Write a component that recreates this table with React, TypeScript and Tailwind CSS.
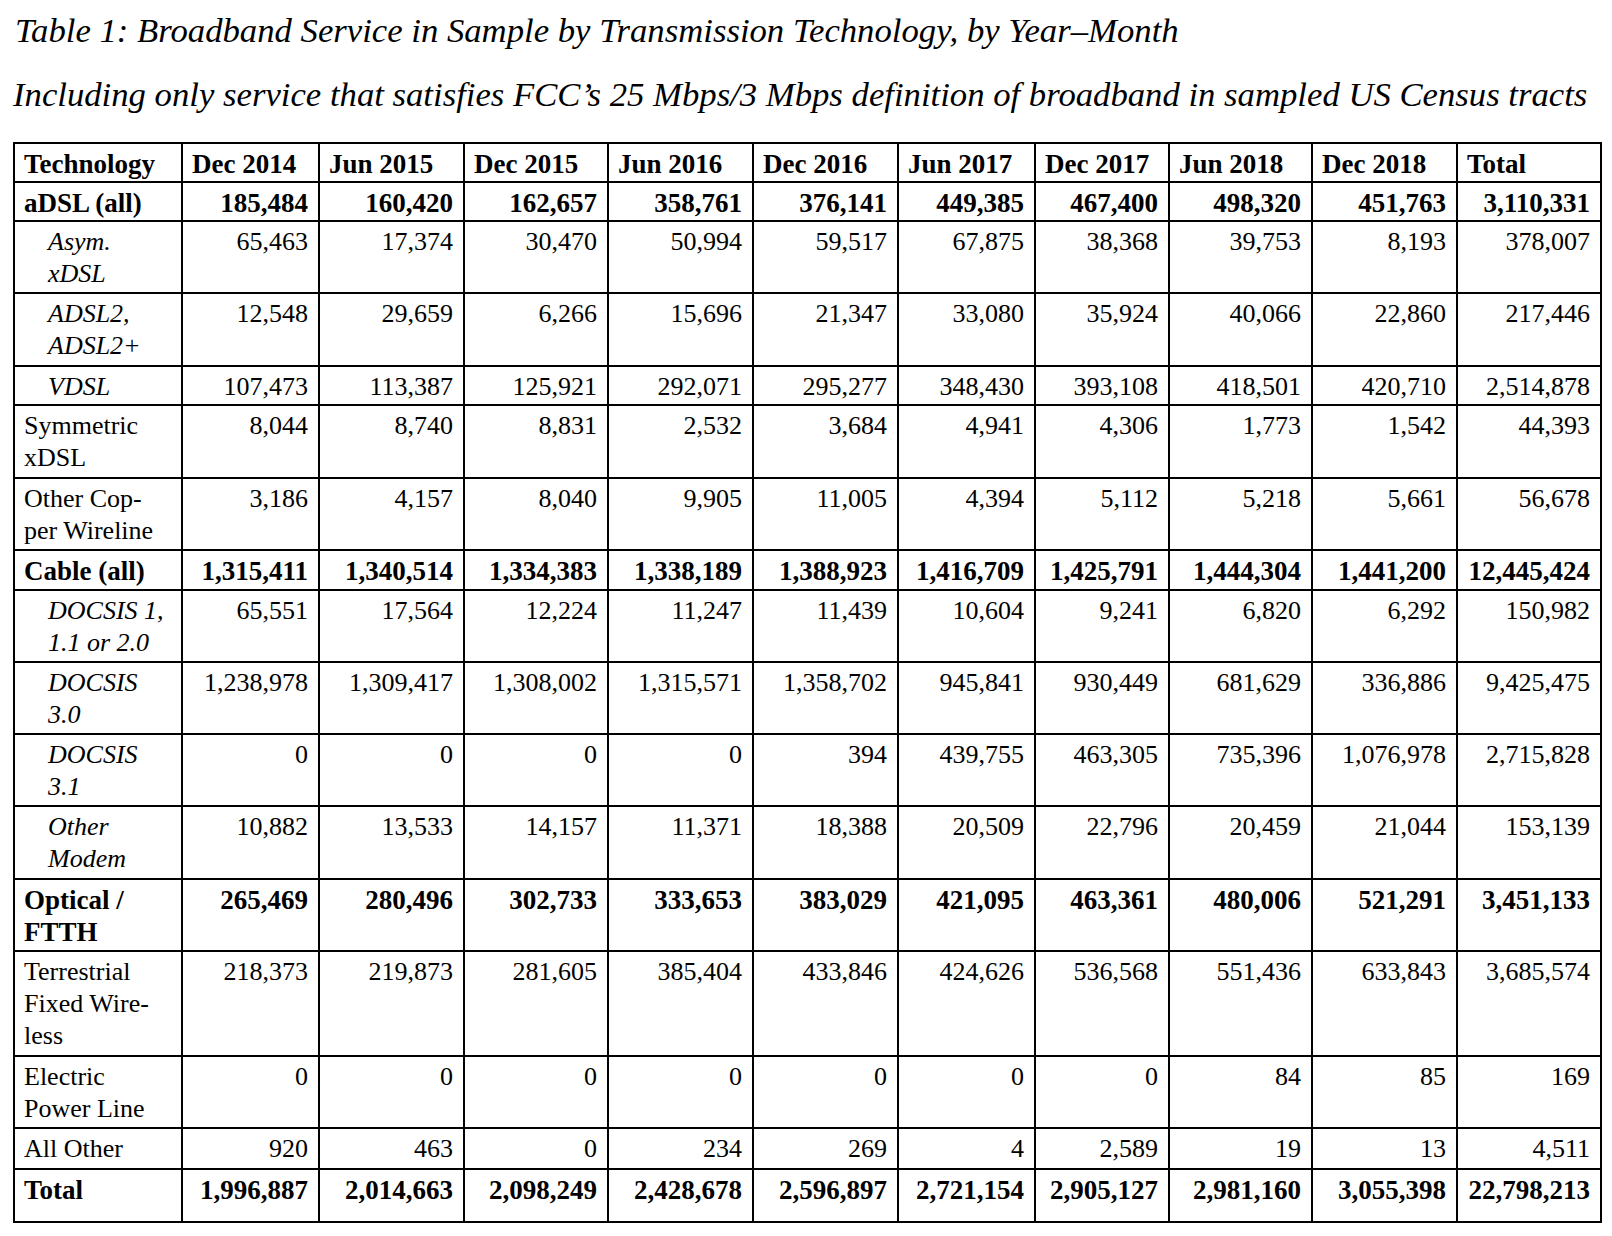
const serif = { fontFamily: '"Liberation Serif", "Times New Roman", serif' } as const

type Row = {
  label: string[]
  kind: 'bold' | 'sub' | 'plain'
  h: string
  values: string[]
}

const headers = ['Dec 2014', 'Jun 2015', 'Dec 2015', 'Jun 2016', 'Dec 2016', 'Jun 2017', 'Dec 2017', 'Jun 2018', 'Dec 2018', 'Total']
const widths = ['w-[168px]', 'w-[137px]', 'w-[145px]', 'w-[144px]', 'w-[145px]', 'w-[145px]', 'w-[137px]', 'w-[134px]', 'w-[143px]', 'w-[145px]', 'w-[144px]']

const rows: Row[] = [
  { label: ['aDSL (all)'], kind: 'bold', h: 'h-[39px]', values: ['185,484', '160,420', '162,657', '358,761', '376,141', '449,385', '467,400', '498,320', '451,763', '3,110,331'] },
  { label: ['Asym.', 'xDSL'], kind: 'sub', h: 'h-[72px]', values: ['65,463', '17,374', '30,470', '50,994', '59,517', '67,875', '38,368', '39,753', '8,193', '378,007'] },
  { label: ['ADSL2,', 'ADSL2+'], kind: 'sub', h: 'h-[73px]', values: ['12,548', '29,659', '6,266', '15,696', '21,347', '33,080', '35,924', '40,066', '22,860', '217,446'] },
  { label: ['VDSL'], kind: 'sub', h: 'h-[39px]', values: ['107,473', '113,387', '125,921', '292,071', '295,277', '348,430', '393,108', '418,501', '420,710', '2,514,878'] },
  { label: ['Symmetric', 'xDSL'], kind: 'plain', h: 'h-[73px]', values: ['8,044', '8,740', '8,831', '2,532', '3,684', '4,941', '4,306', '1,773', '1,542', '44,393'] },
  { label: ['Other Cop-', 'per Wireline'], kind: 'plain', h: 'h-[72px]', values: ['3,186', '4,157', '8,040', '9,905', '11,005', '4,394', '5,112', '5,218', '5,661', '56,678'] },
  { label: ['Cable (all)'], kind: 'bold', h: 'h-[40px]', values: ['1,315,411', '1,340,514', '1,334,383', '1,338,189', '1,388,923', '1,416,709', '1,425,791', '1,444,304', '1,441,200', '12,445,424'] },
  { label: ['DOCSIS 1,', '1.1 or 2.0'], kind: 'sub', h: 'h-[72px]', values: ['65,551', '17,564', '12,224', '11,247', '11,439', '10,604', '9,241', '6,820', '6,292', '150,982'] },
  { label: ['DOCSIS', '3.0'], kind: 'sub', h: 'h-[72px]', values: ['1,238,978', '1,309,417', '1,308,002', '1,315,571', '1,358,702', '945,841', '930,449', '681,629', '336,886', '9,425,475'] },
  { label: ['DOCSIS', '3.1'], kind: 'sub', h: 'h-[72px]', values: ['0', '0', '0', '0', '394', '439,755', '463,305', '735,396', '1,076,978', '2,715,828'] },
  { label: ['Other', 'Modem'], kind: 'sub', h: 'h-[73px]', values: ['10,882', '13,533', '14,157', '11,371', '18,388', '20,509', '22,796', '20,459', '21,044', '153,139'] },
  { label: ['Optical /', 'FTTH'], kind: 'bold', h: 'h-[72px]', values: ['265,469', '280,496', '302,733', '333,653', '383,029', '421,095', '463,361', '480,006', '521,291', '3,451,133'] },
  { label: ['Terrestrial', 'Fixed Wire-', 'less'], kind: 'plain', h: 'h-[105px]', values: ['218,373', '219,873', '281,605', '385,404', '433,846', '424,626', '536,568', '551,436', '633,843', '3,685,574'] },
  { label: ['Electric', 'Power Line'], kind: 'plain', h: 'h-[72px]', values: ['0', '0', '0', '0', '0', '0', '0', '84', '85', '169'] },
  { label: ['All Other'], kind: 'plain', h: 'h-[41px]', values: ['920', '463', '0', '234', '269', '4', '2,589', '19', '13', '4,511'] },
  { label: ['Total'], kind: 'bold', h: 'h-[53px]', values: ['1,996,887', '2,014,663', '2,098,249', '2,428,678', '2,596,897', '2,721,154', '2,905,127', '2,981,160', '3,055,398', '22,798,213'] },
]

const cell = 'border-2 border-black align-top pt-[4px] leading-[32px] whitespace-nowrap'

export default function App() {
  return (
    <div className="min-h-screen bg-white text-black" style={serif}>
      <div className="pt-[11px] pl-[13px]">
        <p className="pl-[2px] text-[34.7px] italic leading-[40px] whitespace-nowrap">
          Table 1: Broadband Service in Sample by Transmission Technology, by Year–Month
        </p>
        <p className="mt-[24px] text-[34.7px] italic leading-[40px] whitespace-nowrap">
          Including only service that satisfies FCC’s 25 Mbps/3 Mbps definition of broadband in sampled US Census tracts
        </p>

        <table className="mt-[27px] table-fixed border-collapse">
          <colgroup>
            {widths.map((w, i) => (
              <col key={i} className={w} />
            ))}
          </colgroup>
          <thead>
            <tr className="h-[39px]">
              <th className={`${cell} pl-[9px] text-left text-[27px] font-bold`}>Technology</th>
              {headers.map((h) => (
                <th key={h} className={`${cell} pl-[9px] text-left text-[27px] font-bold`}>
                  {h}
                </th>
              ))}
            </tr>
          </thead>
          <tbody>
            {rows.map((r) => {
              const bold = r.kind === 'bold'
              return (
                <tr key={r.label.join(' ')} className={r.h}>
                  <td
                    className={`${cell} ${r.kind === 'sub' ? 'pl-[33px] italic text-[26px]' : 'pl-[9px]'} ${bold ? 'font-bold text-[27px]' : r.kind === 'plain' ? 'text-[26px]' : ''}`}
                  >
                    {r.label.map((l, i) => (
                      <div key={i}>{l}</div>
                    ))}
                  </td>
                  {r.values.map((v, i) => (
                    <td key={i} className={`${cell} pr-[10px] text-right ${bold ? 'font-bold text-[27px]' : 'text-[26px]'}`}>
                      {v}
                    </td>
                  ))}
                </tr>
              )
            })}
          </tbody>
        </table>
      </div>
    </div>
  )
}
